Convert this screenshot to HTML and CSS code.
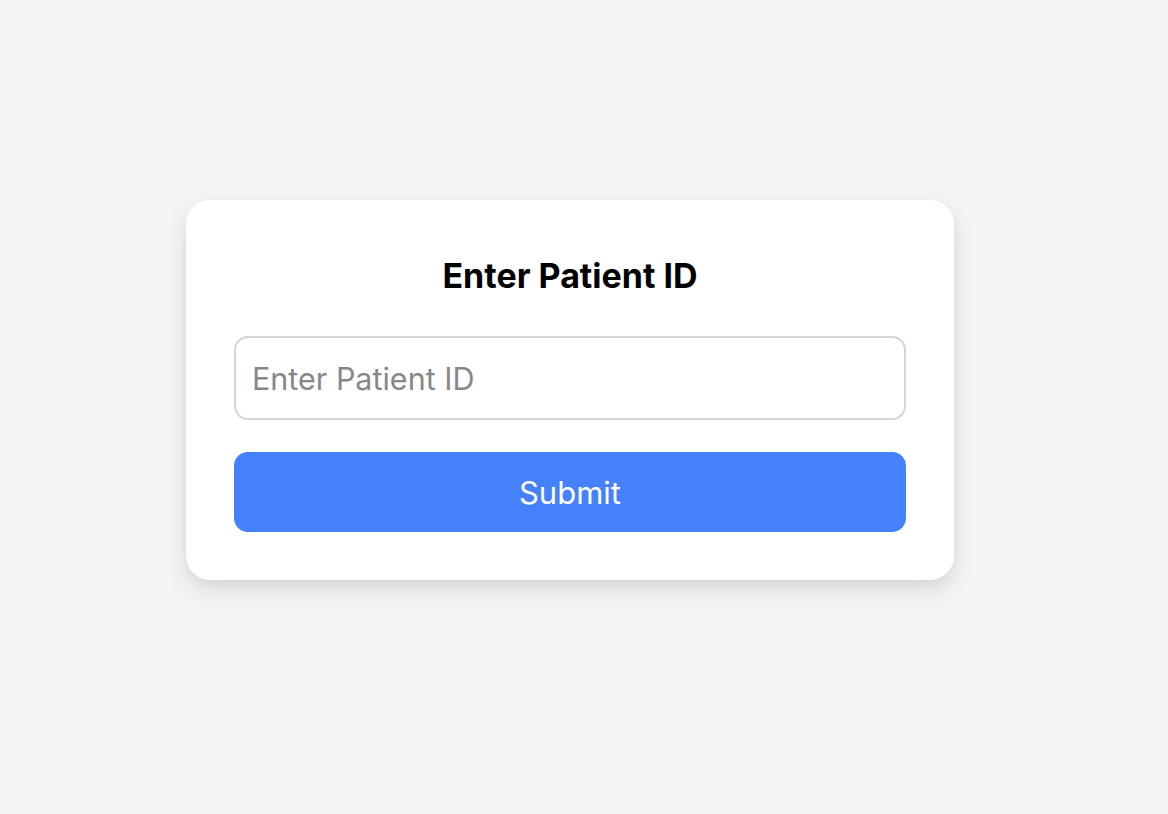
FILE: index.html
```html
<!DOCTYPE html>
<html lang="en">
<head>
<meta charset="utf-8">
<title>Enter Patient ID</title>
<link rel="stylesheet" href="styles.css">
</head>
<body>
<main class="page">
  <form class="card">
    <h2 class="card-title">Enter Patient ID</h2>
    <input class="field" type="text" placeholder="Enter Patient ID">
    <button class="submit" type="button">Submit</button>
  </form>
</main>
</body>
</html>
```
FILE: styles.css
```css
* { box-sizing: border-box; }
html, body { margin: 0; height: 100%; }
body {
  background: #f3f4f6;
  font-family: Inter, "Noto Sans", "Liberation Sans", sans-serif;
}
.page {
  height: 100%;
  display: flex;
  align-items: center;
  justify-content: center;
  padding: 0 28px 34px 0;
}
.card {
  width: 768px;
  background: #ffffff;
  border-radius: 24px;
  padding: 48px;
  box-shadow: 0 10px 25px rgba(0, 0, 0, 0.10), 0 4px 10px rgba(0, 0, 0, 0.04);
  display: flex;
  flex-direction: column;
}
.card-title {
  margin: 0 0 33px;
  font-size: 34px;
  line-height: 55px;
  font-weight: 700;
  color: #000;
  text-align: center;
}
.field {
  height: 84px;
  border: 2px solid #d4d5d9;
  border-radius: 14px;
  padding: 0 16px;
  font-family: inherit;
  font-size: 30.5px;
  color: #111;
  outline: none;
  margin: 0 0 32px;
}
.field::placeholder { color: #878787; }
.submit {
  height: 80px;
  border: none;
  border-radius: 14px;
  background: #4580fd;
  color: #ffffff;
  font-family: inherit;
  font-size: 31px;
  font-weight: 400;
  cursor: pointer;
}
```
